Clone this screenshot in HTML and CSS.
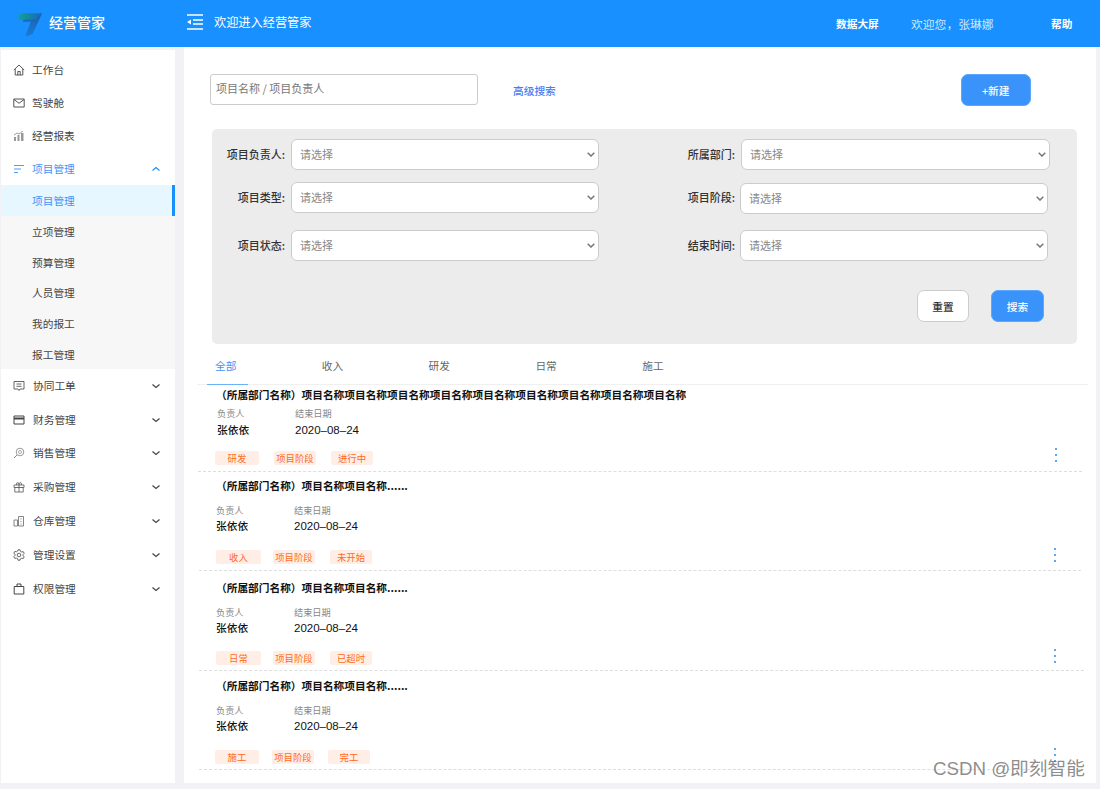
FILE: index.html
```html
<!DOCTYPE html>
<html lang="zh-CN">
<head>
<meta charset="utf-8">
<title>经营管家</title>
<link rel="stylesheet" href="styles.css">
</head>
<body>
<header class="topbar">
  <div class="brand">
    <svg class="logo" viewBox="0 0 28 26" width="26" height="25">
      <defs>
        <linearGradient id="lg1" x1="0" y1="0" x2="1" y2="0"><stop offset="0" stop-color="#12a38a"/><stop offset="1" stop-color="#1766c4"/></linearGradient>
        <linearGradient id="lg2" x1="0" y1="0" x2="0" y2="1"><stop offset="0" stop-color="#1a5fa8"/><stop offset="1" stop-color="#1a7bd8"/></linearGradient>
      </defs>
      <path d="M3 2 Q5 1 8 1 L27 1 L22 8 L1 8 Z" fill="url(#lg1)"/>
      <path d="M22 5 L27 1 L17 23 Q13 26 9 25 L15 10 L6 10 L7 8 L21 7 Z" fill="url(#lg2)"/>
    </svg>
    <span class="brand-name">经营管家</span>
  </div>
  <svg class="fold" viewBox="0 0 17 16" width="17" height="16">
    <path d="M1 1h16M7 6h10M7 10h10M1 15h16" stroke="#fff" stroke-width="1.4" fill="none"/>
    <path d="M1 8l4-2.6v5.2z" fill="#fff"/>
  </svg>
  <span class="welcome">欢迎进入经营管家</span>
  <nav class="top-links">
    <a class="top-big">数据大屏</a>
    <span class="top-user">欢迎您，张琳娜</span>
    <a class="top-help">帮助</a>
  </nav>
</header>

<div class="shell">
  <aside class="sidebar">
    <div class="nav-item">
      <svg class="ico" viewBox="0 0 12 12"><path d="M.8 6L6 1l5.2 5M2.2 5v6h7.600V5M4.800 11V7.500h2.400V11" fill="none" stroke="#555" stroke-width="1"/></svg>
      <span>工作台</span>
    </div>
    <div class="nav-item">
      <svg class="ico" viewBox="0 0 12 12"><path d="M.8 2h10.400v8H.8zM1 2.500l5 3.800 5-3.800" fill="none" stroke="#555" stroke-width="1"/></svg>
      <span>驾驶舱</span>
    </div>
    <div class="nav-item">
      <svg class="ico" viewBox="0 0 12 12"><path d="M1 11V7h2v4zM4.500 11V5h2v6zM8 11V3h2.500v8z" fill="#999"/><path d="M1 5l3-2 2 1 4-3" fill="none" stroke="#888" stroke-width=".8"/></svg>
      <span>经营报表</span>
    </div>
    <div class="nav-item nav-open">
      <svg class="ico" viewBox="0 0 12 12"><path d="M1 2.500h10M1 6h7M1 9.500h4" fill="none" stroke="#4a9cf5" stroke-width="1"/></svg>
      <span>项目管理</span>
      <svg class="chev" viewBox="0 0 10 6"><path d="M1.500 4.500L5 1.500l3.500 3" fill="none" stroke="#1890ff" stroke-width="1.200"/></svg>
    </div>
    <div class="submenu">
      <div class="sub-item sub-active">项目管理</div>
      <div class="sub-item">立项管理</div>
      <div class="sub-item">预算管理</div>
      <div class="sub-item">人员管理</div>
      <div class="sub-item">我的报工</div>
      <div class="sub-item">报工管理</div>
    </div>
    <div class="nav-lower">
      <div class="nav-item">
        <svg class="ico" viewBox="0 0 12 12"><path d="M1 1.500h10v7.500H7l-1 1.500L5 9H1zM3.500 4h5M3.500 6.300h5" fill="none" stroke="#555" stroke-width=".9"/></svg>
        <span>协同工单</span>
        <svg class="chev" viewBox="0 0 10 6"><path d="M1.500 1.500L5 4.500l3.500-3" fill="none" stroke="#444" stroke-width="1.200"/></svg>
      </div>
      <div class="nav-item">
        <svg class="ico" viewBox="0 0 12 12"><path d="M1 2h10v8H1z" fill="none" stroke="#444" stroke-width="1"/><path d="M1 3.500h10v2H1z" fill="#444"/></svg>
        <span>财务管理</span>
        <svg class="chev" viewBox="0 0 10 6"><path d="M1.500 1.500L5 4.500l3.500-3" fill="none" stroke="#444" stroke-width="1.200"/></svg>
      </div>
      <div class="nav-item">
        <svg class="ico" viewBox="0 0 12 12"><circle cx="7" cy="5" r="3.800" fill="none" stroke="#999" stroke-width="1"/><circle cx="7" cy="5" r="1.500" fill="none" stroke="#999" stroke-width=".8"/><path d="M4 8l-3 3" stroke="#888" stroke-width="1"/></svg>
        <span>销售管理</span>
        <svg class="chev" viewBox="0 0 10 6"><path d="M1.500 1.500L5 4.500l3.500-3" fill="none" stroke="#444" stroke-width="1.200"/></svg>
      </div>
      <div class="nav-item">
        <svg class="ico" viewBox="0 0 12 12"><path d="M1 4h10v2.500H1zM1.800 6.500h8.400V11H1.800zM6 4v7M3.500 4V2.300L5 1.500 6 4l1-2.500 1.500.8V4" fill="none" stroke="#666" stroke-width=".9"/></svg>
        <span>采购管理</span>
        <svg class="chev" viewBox="0 0 10 6"><path d="M1.500 1.500L5 4.500l3.500-3" fill="none" stroke="#444" stroke-width="1.200"/></svg>
      </div>
      <div class="nav-item">
        <svg class="ico" viewBox="0 0 12 12"><path d="M1 5h3.500v6H1zM5.500 1.500h5V11h-5zM7.500 4h1M7.500 6.500h1M7.500 9h1" fill="none" stroke="#777" stroke-width=".9"/></svg>
        <span>仓库管理</span>
        <svg class="chev" viewBox="0 0 10 6"><path d="M1.500 1.500L5 4.500l3.500-3" fill="none" stroke="#444" stroke-width="1.200"/></svg>
      </div>
      <div class="nav-item">
        <svg class="ico" viewBox="0 0 12 12"><path d="M5 .8h2l.4 1.500 1.300.7 1.500-.4 1 1.700-1.100 1.100v1.400l1.100 1.100-1 1.700-1.500-.4-1.300.7L7 11.200H5l-.4-1.500-1.300-.7-1.500.4-1-1.700 1.100-1.100V5.200L.8 4.100l1-1.700 1.500.4 1.300-.7z" fill="none" stroke="#555" stroke-width=".9"/><circle cx="6" cy="6" r="1.800" fill="none" stroke="#555" stroke-width=".9"/></svg>
        <span>管理设置</span>
        <svg class="chev" viewBox="0 0 10 6"><path d="M1.500 1.500L5 4.500l3.500-3" fill="none" stroke="#444" stroke-width="1.200"/></svg>
      </div>
      <div class="nav-item">
        <svg class="ico" viewBox="0 0 12 12"><path d="M1.200 3.500h9.600V11H1.200zM4 3.500V1h4v2.500" fill="none" stroke="#444" stroke-width="1"/></svg>
        <span>权限管理</span>
        <svg class="chev" viewBox="0 0 10 6"><path d="M1.500 1.500L5 4.500l3.500-3" fill="none" stroke="#444" stroke-width="1.200"/></svg>
      </div>
    </div>
  </aside>

  <main class="main">
    <div class="search-bar">
      <input class="search-input" type="text" placeholder="项目名称 / 项目负责人">
      <a class="adv-link">高级搜索</a>
      <button class="btn btn-new">+新建</button>
    </div>

    <section class="filter">
      <div class="filter-row">
        <label class="f-label">项目负责人:</label>
        <select class="f-select"><option>请选择</option></select>
        <label class="f-label">所属部门:</label>
        <select class="f-select f-wide"><option>请选择</option></select>
      </div>
      <div class="filter-row row-two">
        <label class="f-label">项目类型:</label>
        <select class="f-select"><option>请选择</option></select>
        <label class="f-label f-shift">项目阶段:</label>
        <select class="f-select f-shift f-down"><option>请选择</option></select>
      </div>
      <div class="filter-row row-three">
        <label class="f-label">项目状态:</label>
        <select class="f-select"><option>请选择</option></select>
        <label class="f-label f-shift">结束时间:</label>
        <select class="f-select f-shift"><option>请选择</option></select>
      </div>
      <div class="filter-actions">
        <button class="btn btn-reset">重置</button>
        <button class="btn btn-search">搜索</button>
      </div>
    </section>

    <div class="tabs">
      <span class="tab tab-active">全部</span>
      <span class="tab">收入</span>
      <span class="tab">研发</span>
      <span class="tab">日常</span>
      <span class="tab">施工</span>
    </div>

    <article class="card card-a">
      <h3 class="card-title">（所属部门名称）项目名称项目名称项目名称项目名称项目名称项目名称项目名称项目名称项目名称</h3>
      <div class="meta">
        <div class="meta-col"><span class="meta-label">负责人</span><span class="meta-value">张依依</span></div>
        <div class="meta-col"><span class="meta-label">结束日期</span><span class="meta-value meta-date">2020–08–24</span></div>
      </div>
      <div class="tag-row">
        <span class="tag tag-first">研发</span><span class="tag">项目阶段</span><span class="tag">进行中</span>
        <svg class="more" viewBox="0 0 4 16"><circle cx="2" cy="2" r="1.100"/><circle cx="2" cy="8" r="1.100"/><circle cx="2" cy="14" r="1.100"/></svg>
      </div>
    </article>

    <article class="card card-b">
      <h3 class="card-title">（所属部门名称）项目名称项目名称......</h3>
      <div class="meta">
        <div class="meta-col"><span class="meta-label">负责人</span><span class="meta-value">张依依</span></div>
        <div class="meta-col"><span class="meta-label">结束日期</span><span class="meta-value meta-date">2020–08–24</span></div>
      </div>
      <div class="tag-row">
        <span class="tag tag-first">收入</span><span class="tag">项目阶段</span><span class="tag">未开始</span>
        <svg class="more" viewBox="0 0 4 16"><circle cx="2" cy="2" r="1.100"/><circle cx="2" cy="8" r="1.100"/><circle cx="2" cy="14" r="1.100"/></svg>
      </div>
    </article>

    <article class="card card-c">
      <h3 class="card-title">（所属部门名称）项目名称项目名称......</h3>
      <div class="meta">
        <div class="meta-col"><span class="meta-label">负责人</span><span class="meta-value">张依依</span></div>
        <div class="meta-col"><span class="meta-label">结束日期</span><span class="meta-value meta-date">2020–08–24</span></div>
      </div>
      <div class="tag-row">
        <span class="tag tag-first">日常</span><span class="tag">项目阶段</span><span class="tag">已超时</span>
        <svg class="more" viewBox="0 0 4 16"><circle cx="2" cy="2" r="1.100"/><circle cx="2" cy="8" r="1.100"/><circle cx="2" cy="14" r="1.100"/></svg>
      </div>
    </article>

    <article class="card card-d">
      <h3 class="card-title">（所属部门名称）项目名称项目名称......</h3>
      <div class="meta">
        <div class="meta-col"><span class="meta-label">负责人</span><span class="meta-value">张依依</span></div>
        <div class="meta-col"><span class="meta-label">结束日期</span><span class="meta-value meta-date">2020–08–24</span></div>
      </div>
      <div class="tag-row">
        <span class="tag tag-first">施工</span><span class="tag">项目阶段</span><span class="tag">完工</span>
        <svg class="more" viewBox="0 0 4 16"><circle cx="2" cy="2" r="1.100"/><circle cx="2" cy="8" r="1.100"/><circle cx="2" cy="14" r="1.100"/></svg>
      </div>
    </article>
  </main>
</div>
<div class="watermark">CSDN @即刻智能</div>
</body>
</html>
```

FILE: styles.css
```css
* { box-sizing: border-box; }
html, body { margin: 0; padding: 0; }
body {
  width: 1100px;
  height: 789px;
  overflow: hidden;
  position: relative;
  background: #f1f1f6;
  font-family: "Noto Sans CJK SC", "Liberation Sans", sans-serif;
  font-size: 10.7px;
  color: #444;
}

/* header */
.topbar {
  height: 47px;
  background: #1890ff;
  color: #fff;
  display: flex;
  align-items: center;
}
.brand { display: flex; align-items: center; width: 186px; padding-left: 17px; }
.logo { display: block; margin-top: 2px; flex: none; }
.brand-name { font-size: 14px; font-weight: 500; margin-left: 6px; margin-top: -3px; line-height: 20px; }
.fold { display: block; margin-top: -3px; }
.welcome { font-size: 12.200px; margin-left: 11px; margin-top: -4px; line-height: 18px; }
.top-links { display: flex; align-items: center; margin-left: auto; font-size: 10.700px; line-height: 16px; }
.top-big { font-weight: 700; width: 75px; }
.top-user { font-size: 11.800px; color: #cfe6ff; width: 140px; }
.top-help { font-weight: 700; width: 49px; }

/* shell */
.shell { display: flex; align-items: flex-start; padding-left: 1px; }

/* sidebar */
.sidebar { width: 174px; height: 733px; margin-top: 3px; background: #fff; padding-top: 3px; }
.nav-item { height: 33px; display: flex; align-items: center; padding: 0 14px 0 12px; color: #444; line-height: 16px; }
.nav-item span { margin-left: 7px; }
.ico { width: 12px; height: 12px; flex: none; }
.chev { width: 10px; height: 6px; margin-left: auto; flex: none; }
.nav-open { color: #3f94f5; }
.submenu { background: #f7f7f7; height: 184px; }
.sub-item { height: 30.800px; line-height: 32.400px; padding-left: 31px; color: #444; }
.sub-active { background: #e6f7ff; color: #3f94f5; border-right: 3px solid #1890ff; }
.nav-lower .nav-item { height: 33.800px; }
.nav-lower span { margin-left: 8px; }

/* main */
.main { width: 912px; height: 736px; margin-left: 9px; background: #fff; padding-top: 27px; position: relative; }
.search-bar { display: flex; align-items: flex-start; padding-left: 26px; }
.search-input {
  width: 268px;
  height: 31px;
  border: 1px solid #ccc;
  border-radius: 3px;
  padding: 0 5px 3px;
  font: 11px "Noto Sans CJK SC", sans-serif;
  outline: none;
}
.search-input::placeholder { color: #777; opacity: 1; }
.adv-link { color: #4a7df0; margin-left: 35px; margin-top: 9px; line-height: 16px; font-weight: 500; }
.btn {
  display: block;
  border-radius: 7px;
  font: 500 10.700px "Noto Sans CJK SC", sans-serif;
  padding: 0;
  text-align: center;
}
.btn-new { width: 70px; height: 32px; margin-left: 405px; background: #3a92fb; color: #fff; border: 1px solid #5ea7fc; }

/* filter */
.filter { width: 865px; height: 215px; margin: 23px 0 0 28px; background: #ececec; border-radius: 5px; padding-top: 10px; }
.filter-row { display: grid; grid-template-columns: 79px 308px 142px 308px; align-items: start; }
.row-two { margin-top: 12px; }
.row-three { margin-top: 16px; }
.f-label { text-align: right; padding-right: 6px; line-height: 30px; color: #333; font-size: 11px; font-weight: 500; }
.f-select {
  appearance: none;
  width: 308px;
  height: 31px;
  border: 1px solid #ccc;
  border-radius: 6px;
  background-color: #fff;
  background-image: url("data:image/svg+xml,%3Csvg xmlns='http://www.w3.org/2000/svg' width='8' height='5'%3E%3Cpath d='M.7.7L4 4 7.300.7' fill='none' stroke='%23777' stroke-width='1.500'/%3E%3C/svg%3E");
  background-repeat: no-repeat;
  background-position: right 3px center;
  color: #888;
  padding: 0 0 2px 8px;
  font: 11px "Noto Sans CJK SC", sans-serif;
}
.f-wide { width: 309px; }
.f-shift { margin-left: -1px; }
.f-down { margin-top: 1px; }
.filter-actions { display: flex; justify-content: flex-end; gap: 22px; padding-right: 33px; margin-top: 29px; }
.btn-reset { width: 52px; height: 32px; background: #fff; color: #333; border: 1px solid #ccc; }
.btn-search { width: 53px; height: 32px; background: #3a92fb; color: #fff; border: 1px solid #5ea7fc; }

/* tabs */
.tabs { display: flex; margin: 6px 8px 0 13px; padding-left: 10px; height: 35px; border-bottom: 1px solid #f0f0f0; }
.tab { width: 106.800px; padding: 8px 0 0 8px; line-height: 16px; color: #666; position: relative; }
.tab-active { color: #3f94f5; }
.tab-active::after { content: ""; position: absolute; left: 0; bottom: -1px; width: 41px; height: 1px; background: #6cb2fb; }

/* cards */
.card { border-bottom: 1px dashed #dedede; margin-left: 15px; }
.card-title { margin: 0; font-size: 10.700px; font-weight: 700; color: #111; line-height: 16px; }
.meta { display: flex; padding-left: 17px; margin-top: 9px; }
.meta-col { display: flex; flex-direction: column; width: 78px; }
.meta-label { font-size: 9.200px; color: #888; line-height: 14px; }
.meta-value { font-size: 10.700px; font-weight: 500; color: #111; line-height: 16px; margin-top: 1px; }
.meta-date { font-family: "Liberation Sans", sans-serif; font-size: 11.500px; font-weight: 400; }
.tag-row { display: flex; align-items: center; height: 14px; padding-left: 17px; margin-top: 16px; }
.tag { width: 42px; height: 14px; line-height: 14px; text-align: center; font-size: 9.400px; color: #ff6a1a; background: #ffeee6; border-radius: 2px; flex: none; margin-left: 15px; }
.tag:nth-child(2) { margin-left: 12px; }
.tag-first { margin-left: 0; width: 45px; }
.more { width: 4px; height: 16px; fill: #3a92e8; flex: none; margin-top: -5px; margin-left: 681px; }

.card-a { width: 884px; margin-top: 2px; height: 85px; margin-left: 14px; }
.card-a .card-title { padding-left: 18px; }
.card-a .meta { padding-left: 19px; margin-top: 3px; }
.card-a .meta-value { margin-top: 2px; }
.card-a .tag-row { margin-top: 13px; }
.card-a .tag-first { width: 44px; }
.card-a .tag:nth-child(2) { margin-left: 15px; }
.card-a .more { margin-top: -6px; }

.card-b { width: 882px; height: 99px; }
.card-b .card-title { padding: 6px 0 0 17px; }

.card-c { width: 885px; height: 100px; }
.card-c .card-title { padding: 9px 0 0 17px; }
.card-c .tag-row { margin-top: 15px; }

.card-d { width: 881px; height: 99px; }
.card-d .card-title { padding: 7px 0 0 17px; }
.card-d .tag-row { padding-left: 16px; }
.card-d .tag-first { width: 44px; }
.card-d .tag:nth-child(2) { margin-left: 13px; }
.card-d .tag:nth-child(3) { margin-left: 14px; }
.card-d .more { margin-left: 683px; }

.watermark {
  position: absolute;
  left: 933px;
  top: 755px;
  font-family: "Liberation Sans", "Noto Sans CJK SC", sans-serif;
  font-size: 18.700px;
  line-height: 28px;
  color: rgba(120, 120, 120, .85);
  white-space: nowrap;
}
```
